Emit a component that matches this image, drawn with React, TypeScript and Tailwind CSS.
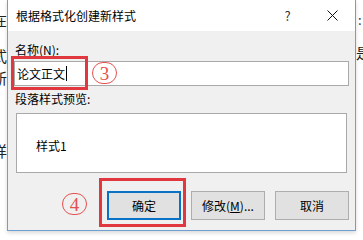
import React from "react";

function CloseIcon() {
  return (
    <svg width="11" height="11" viewBox="0 0 11 11" className="block">
      <path d="M0.5 0.5 L10.5 10.5 M10.5 0.5 L0.5 10.5" stroke="#111" strokeWidth="1" />
    </svg>
  );
}

function DialogButton({
  children,
  primary = false,
}: {
  children: React.ReactNode;
  primary?: boolean;
}) {
  return (
    <button
      type="button"
      className={
        primary
          ? "flex h-[29px] w-[74px] items-center justify-center border-2 border-[#0a72c4] bg-[#e1e1e1] text-[12px] text-black"
          : "flex h-[29px] w-[74px] items-center justify-center border border-[#adadad] bg-[#e1e1e1] text-[12px] text-black"
      }
    >
      {children}
    </button>
  );
}

// circled step number drawn over the screenshot
function StepMark({ n, className }: { n: string; className: string }) {
  return (
    <span
      className={
        "absolute flex h-[22px] w-[25px] items-center justify-center rounded-full border border-[#e4514f] font-['Liberation_Serif',serif] text-[19px] leading-none text-[#e4514f] " +
        className
      }
    >
      {n}
    </span>
  );
}

export default function App() {
  return (
    <div className="relative h-[238px] w-[363px] overflow-hidden bg-white font-['Noto_Sans_CJK_SC','Microsoft_YaHei',sans-serif] text-black">
      {/* document text peeking out behind the dialog */}
      <span className="absolute left-[-8px] top-[12px] text-[15px] leading-[16px] text-[#222]">在</span>
      <span className="absolute left-[-8px] top-[48px] text-[15px] leading-[16px] text-[#222]">式</span>
      <span className="absolute left-[-8px] top-[70px] text-[15px] leading-[16px] text-[#222]">新</span>
      <span className="absolute left-[-8px] top-[143px] text-[15px] leading-[16px] text-[#222]">详</span>
      <span className="absolute left-[358px] top-[12px] text-[13px] leading-[16px] text-[#333]">:</span>
      <span className="absolute left-[356px] top-[45px] text-[15px] leading-[16px] text-[#222]">是</span>

      {/* dialog window */}
      <div className="absolute left-[7px] top-0 flex h-[231px] w-[349px] flex-col border border-t-0 border-[#6f9fd0] bg-[#f0f0f0] shadow-[0_2px_4px_rgba(0,0,0,0.15)]">
        <div className="flex h-[31px] items-center bg-white pl-2">
          <span className="flex-1 text-[12px] leading-[16px]">根据格式化创建新样式</span>
          <span className="flex w-[45px] items-center justify-center text-[13px] leading-[16px] text-[#333]">?</span>
          <span className="flex w-[45px] items-center justify-center">
            <CloseIcon />
          </span>
        </div>

        <div className="flex flex-1 flex-col px-[6px] pt-[11px]">
          <label className="ml-[1px] text-[12px] leading-[16px]">
            名称(<span className="underline">N</span>):
          </label>
          <div className="mt-[3px] flex h-[25px] items-center border border-[#a9a9a9] bg-white pl-[2px] text-[12px]">
            <span>论文正文</span>
            <span className="ml-[1px] h-[15px] w-px bg-black" />
          </div>

          <label className="ml-[1px] mt-[5px] text-[12px] leading-[16px]">段落样式预览:</label>
          <div className="mx-[2px] mt-[6px] h-[60px] border border-[#a9a9a9] bg-white pl-[19px] pt-[24px] text-[12px] leading-[16px]">
            样式1
          </div>

          <div className="mt-[18px] flex justify-end gap-[10px]">
            <DialogButton primary>确定</DialogButton>
            <DialogButton>
              修改(<span className="underline">M</span>)...
            </DialogButton>
            <DialogButton>取消</DialogButton>
          </div>
        </div>
      </div>

      {/* red annotations */}
      <div className="absolute left-[11px] top-[56px] h-[34px] w-[77px] border-[3px] border-[#e0383e]" />
      <StepMark n="3" className="left-[92px] top-[62px]" />
      <div className="absolute left-[99px] top-[178px] h-[49px] w-[87px] border-[3px] border-[#e0383e]" />
      <StepMark n="4" className="left-[62px] top-[193px]" />
    </div>
  );
}
